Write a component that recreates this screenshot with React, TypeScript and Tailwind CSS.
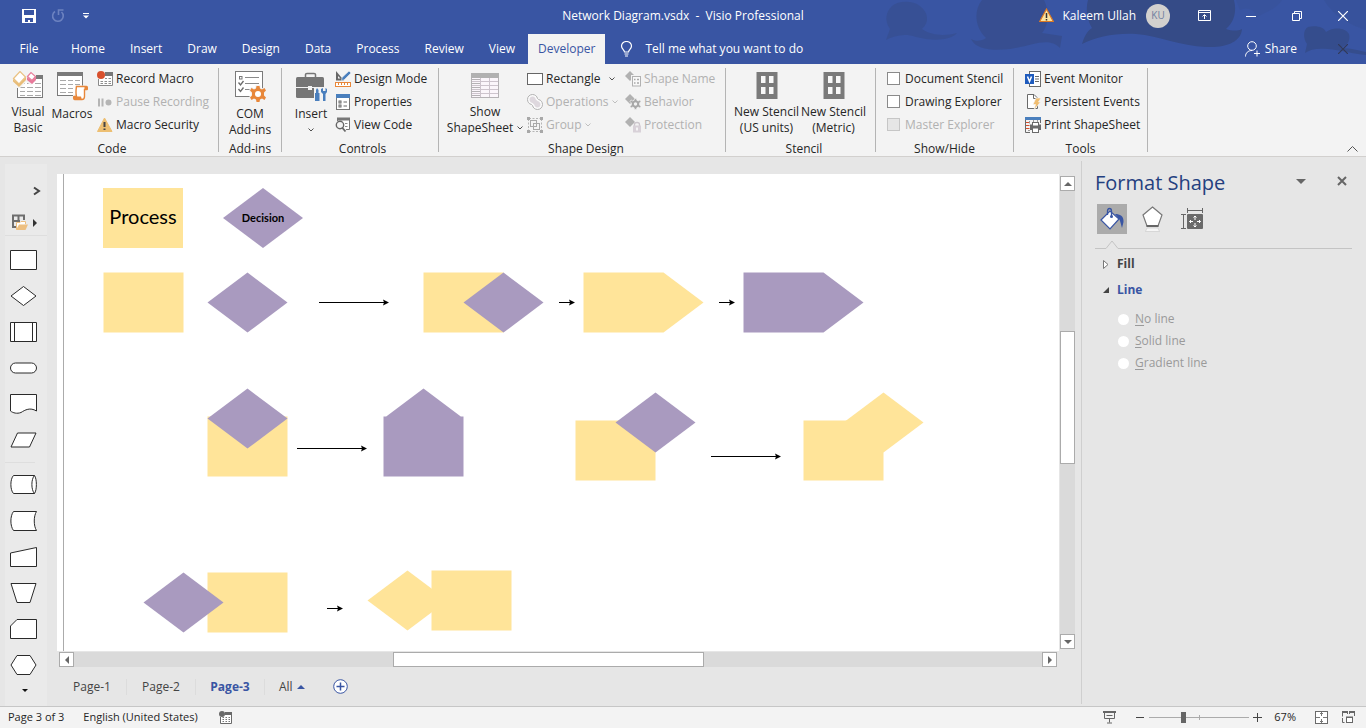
import React, { useState } from "react";

const tabs = [
  "Home",
  "Insert",
  "Draw",
  "Design",
  "Data",
  "Process",
  "Review",
  "View",
  "Developer",
];

const YELLOW = "#ffe499";
const PURPLE = "#a99abf";

/* ---------- small shared pieces ---------- */

function Chevron({ className = "" }: { className?: string }) {
  return (
    <svg width="6" height="4" viewBox="0 0 6 4" className={className}>
      <path d="M0.5 0.5L3 3L5.5 0.5" fill="none" stroke="currentColor" strokeOpacity=".8" />
    </svg>
  );
}

function Group({
  label,
  className,
  children,
}: {
  label: string;
  className: string;
  children: React.ReactNode;
}) {
  return (
    <>
      <section className={`flex shrink-0 flex-col ${className}`}>
        <div className="flex h-[69px]">{children}</div>
        <div className="mt-[5px] h-[15px] text-center leading-4">{label}</div>
      </section>
      <div className="mt-px h-[84px] w-px shrink-0 bg-[#b4b4b4]" />
    </>
  );
}

function BigButton({
  icon,
  lines,
  className,
  arrow,
}: {
  icon: React.ReactNode;
  lines: string[];
  className: string;
  arrow?: boolean;
}) {
  return (
    <button className={`flex shrink-0 flex-col items-center pt-1 leading-4 ${className}`}>
      <span className="mb-[3px] flex h-8 items-start justify-center">{icon}</span>
      {lines.map((line, i) => (
        <span key={line} className="flex items-center gap-1 whitespace-nowrap">
          {line}
          {arrow && i === 1 && <Chevron />}
        </span>
      ))}
      {arrow && lines.length === 1 && <Chevron className="mt-1.5" />}
    </button>
  );
}

function SmallButton({
  icon,
  label,
  disabled,
  arrow,
}: {
  icon: React.ReactNode;
  label: string;
  disabled?: boolean;
  arrow?: "near" | "far";
}) {
  return (
    <button
      disabled={disabled}
      className="flex h-[23px] items-center gap-[3px] whitespace-nowrap disabled:text-[#b1b1b1]"
    >
      {icon}
      {label}
      {arrow && <Chevron className={arrow === "far" ? "ml-1.5" : ""} />}
    </button>
  );
}

/* ---------- ribbon icons ---------- */

function VisualBasicIcon() {
  return (
    <svg width="32" height="30" viewBox="0 0 32 30">
      <rect x="5.5" y="4.5" width="25" height="22" fill="#fff" stroke="#7a7a7a" />
      <rect x="5" y="4" width="26" height="4" fill="#7a7a7a" />
      <path d="M8 12.5h5M15 12.5h6M23 12.5h6M8 16.5h5M15 16.5h6M23 16.5h6M8 20.5h5M15 20.5h6M23 20.5h6M8 24.5h5M15 24.5h6M23 24.5h6" stroke="#a9a9a9" />
      <path d="M0 8L8 -1H16L24 4V10L19 14L14 11L8 17H4L0 12Z" fill="#f3f3f3" />
      <path d="M1.5 7.5L8 0.5L13.5 6L7 13Z" fill="#fff" stroke="#eac282" strokeWidth="1.2" />
      <path d="M1 8L7 13V16L1 10.500ZM7 13L14 6V9L7 16Z" fill="#e8bd78" />
      <path d="M15.500 5.500L19 1.500L23.500 5.500L20 9.500Z" fill="#fff" stroke="#e77f9b" strokeWidth="1.200" />
      <path d="M15 6L20 9.500V13L15 9ZM20 9.500L24 5.500V9L20 13Z" fill="#e8799a" />
    </svg>
  );
}

function MacrosIcon() {
  return (
    <svg width="32" height="30" viewBox="0 0 32 30">
      <rect x="1.500" y="1.500" width="25" height="23" fill="#fff" stroke="#7a7a7a" />
      <rect x="1" y="1" width="26" height="4" fill="#7a7a7a" />
      <path d="M4 9.500h6M12 9.500h5M19 9.500h5M4 13.500h6M12 13.500h5M19 13.500h5M4 17.500h6M12 17.500h5M4 21.500h6M12 21.500h5" stroke="#a9a9a9" />
      <path d="M20 15.500H31V19H29V26.500L27 28.500H18V24.500H20Z" fill="#f3f3f3" stroke="#f3f3f3" strokeWidth="2" />
      <path d="M20.500 15.500H30.500C31.500 15.500 31.500 18.500 31 18.500H28.500V25.500C28.500 28 27 28.500 26 28.500H18.500C17.500 28.500 17.500 25.500 18 25.500H20.500C19.500 22 20 19 20.500 15.500Z" fill="#fff" stroke="#e8873a" strokeWidth="1.400" />
      <path d="M17.500 25.500H25L26 29H18.500C17.500 29 17 27 17.500 25.500ZM28.500 15H31C32 16 31.500 19 31 19H28.500Z" fill="#e8873a" />
    </svg>
  );
}

function RecordIcon() {
  return (
    <svg width="16" height="16" viewBox="0 0 16 16">
      <path d="M8 2.500H15.500V14.500H1.500V8" fill="#fff" stroke="#8a8a8a" />
      <rect x="8" y="1" width="8" height="4" fill="#777" />
      <path d="M8 7.500h2M11.500 7.500h2.500M3.500 10.500h2.500M7.500 10.500h2.500M11.500 10.500h2.500M3.500 12.500h2.500M7.500 12.500h2.500M11.500 12.500h2.500" stroke="#8f8f8f" />
      <circle cx="4" cy="4" r="4" fill="#d8502d" />
    </svg>
  );
}

function PauseIcon() {
  return (
    <svg width="16" height="16" viewBox="0 0 16 16">
      <path d="M2 4.500V12.500M5.500 4.500V12.500" stroke="#b5b5b5" strokeWidth="2" />
      <circle cx="11.500" cy="8.500" r="3" fill="#b5b5b5" />
    </svg>
  );
}

function WarnIcon() {
  return (
    <svg width="16" height="16" viewBox="0 0 16 16">
      <path d="M7.500 1L15 14.500H0.500Z" fill="#edbf72" stroke="#edbf72" strokeLinejoin="round" />
      <path d="M7.500 5V10M7.500 11.500V13" stroke="#444" strokeWidth="2" />
    </svg>
  );
}

const GEAR =
  "M-1.500 -8H1.500L2 -5.500L4 -4.500L6.500 -6L8 -3.500L6 -1.500V1.500L8 3.500L6.500 6L4 4.500L2 5.500L1.500 8H-1.500L-2 5.500L-4 4.500L-6.500 6L-8 3.500L-6 1.500V-1.500L-8 -3.500L-6.500 -6L-4 -4.500L-2 -5.500Z";

function ComIcon() {
  return (
    <svg width="32" height="32" viewBox="0 0 32 32">
      <rect x="1.500" y="0.500" width="27" height="25" fill="#fff" stroke="#7a7a7a" />
      <rect x="5.500" y="5.500" width="2.500" height="2.500" fill="none" stroke="#777" />
      <path d="M11 6.500H25M11 12.500H25M11 18.500H17" stroke="#8a8a8a" />
      <path d="M4.500 11.500L6.500 14L9.500 10M4.500 18L6.500 20.500L9.500 16.500" fill="none" stroke="#6a6a6a" strokeWidth="1.300" />
      <g transform="translate(24 23)">
        <path d={GEAR} fill="#f3f3f3" stroke="#f3f3f3" strokeWidth="2" />
        <path d={GEAR} fill="#e8873a" />
        <circle r="3" fill="#fff" />
      </g>
    </svg>
  );
}

function ToolboxIcon() {
  return (
    <svg width="32" height="32" viewBox="0 0 32 32">
      <path d="M10.500 6V3.500Q10.500 2.500 12 2.500H19Q20.500 2.500 20.500 3.500V6" fill="none" stroke="#767676" strokeWidth="1.500" />
      <rect x="1" y="6" width="28" height="21" rx="1.500" fill="#767676" />
      <path d="M1 16.500H13M17 16.500H20" stroke="#f3f3f3" />
      <rect x="13" y="15" width="4" height="4" fill="#f3f3f3" />
      <path d="M19 16H32V32H19Z" fill="#f3f3f3" />
      <path d="M21 19L22 17L23.500 19V22H24.500V30H20V22H21Z" fill="#4a7fbd" />
      <path d="M26 18V21L28 23V30H30.500V23L32 21V18L30.500 17V20H28V17Z" fill="#4a7fbd" />
    </svg>
  );
}

function DesignModeIcon() {
  return (
    <svg width="16" height="16" viewBox="0 0 16 16">
      <path d="M1 0V9.500H9Z" fill="#666" />
      <path d="M3 5V7.500H5.500Z" fill="#f3f3f3" />
      <path d="M6.500 9.500L7 6.500L14 0L16 2L9 9Z" fill="#4a7fbd" stroke="#f3f3f3" strokeWidth="0.600" />
      <rect x="0.500" y="11.500" width="15" height="4" fill="#fff" stroke="#e8873a" />
      <path d="M3.500 12V14M6.500 12V14M9.500 12V14M12.500 12V14" stroke="#e8873a" />
    </svg>
  );
}

function PropertiesIcon() {
  return (
    <svg width="16" height="16" viewBox="0 0 16 16">
      <rect x="1.500" y="1.500" width="13" height="14" fill="#fff" stroke="#777" />
      <rect x="1" y="0" width="14" height="4" fill="#4a7fbd" />
      <rect x="4" y="7" width="2" height="2" fill="none" stroke="#666" />
      <rect x="4" y="11" width="2" height="2" fill="none" stroke="#666" />
      <path d="M8.500 8H12M8.500 12H12" stroke="#666" />
    </svg>
  );
}

function ViewCodeIcon() {
  return (
    <svg width="16" height="16" viewBox="0 0 16 16">
      <path d="M2.500 4V1.500H14.500V12.500H11" fill="#fff" stroke="#777" />
      <rect x="2" y="0.500" width="13" height="3" fill="#777" />
      <path d="M10 6.500H12.500M10 9.500H12.500" stroke="#888" />
      <circle cx="5" cy="8" r="3.700" fill="#f3f3f3" stroke="#666" strokeWidth="1.400" />
      <path d="M7 10.500L10.500 14.500" stroke="#666" strokeWidth="1.800" />
    </svg>
  );
}

function SheetIcon() {
  return (
    <svg width="30" height="28" viewBox="0 0 30 28">
      <rect x="1.500" y="2.500" width="27" height="24" fill="#fbf6fb" stroke="#b5b2b5" />
      <rect x="1" y="2" width="28" height="5" fill="#b1b1b1" />
      <path d="M2 10.500H28M2 14.500H28M2 18.500H28M2 22.500H28M10.500 7V26M19.500 7V26" stroke="#cdc4cd" />
      <path d="M2 8.500H10M2 12.500H10M2 16.500H10M2 20.500H10M2 24.500H10" stroke="#b5b2b5" />
    </svg>
  );
}

function OperationsIcon() {
  return (
    <svg width="16" height="16" viewBox="0 0 16 16">
      <path d="M5.500 0.500C8 0.500 10 2.200 10.500 4.500L11.500 5.500C14 6 15.500 8 15.500 10.500C15.500 13.500 13.200 15.500 10.500 15.500C8 15.500 6 13.800 5.500 11.500L4.500 10.500C2 10 0.500 8 0.500 5.500C0.500 2.500 2.800 0.500 5.500 0.500Z" fill="#fafafa" stroke="#b1b1b1" />
      <path d="M5.500 2.500C7.500 2.500 8.500 4 8.800 5.500L10.500 7C12.500 7.500 13.500 9 13.500 10.500C13.500 12.500 12 13.500 10.500 13.500C8.500 13.500 7.500 12 7.200 10.500L5.500 9C3.500 8.500 2.500 7 2.500 5.500C2.500 3.500 4 2.500 5.500 2.500Z" fill="#ded8de" />
    </svg>
  );
}

function GroupIcon() {
  return (
    <svg width="16" height="16" viewBox="0 0 16 16">
      <path d="M2 1.500H14M2 14.500H14M1.500 2V14M14.500 2V14" stroke="#b5b5b5" strokeDasharray="2 1.500" />
      <rect x="3.500" y="3.500" width="6" height="6" fill="none" stroke="#a8a8a8" />
      <rect x="6.500" y="6.500" width="6" height="6" fill="none" stroke="#a8a8a8" />
      <path d="M0 0H3V3H0ZM13 0H16V3H13ZM0 13H3V16H0ZM13 13H16V16H13Z" fill="#a8a8a8" />
    </svg>
  );
}

function ShapeNameIcon() {
  return (
    <svg width="16" height="16" viewBox="0 0 16 16">
      <path d="M5 0L10 5L5 10L0 5Z" fill="#b1b1b1" />
      <rect x="6" y="4" width="10" height="12" fill="#f3f3f3" />
      <rect x="7.500" y="5.500" width="8" height="9.500" fill="#f8f8f8" stroke="#b1b1b1" />
      <path d="M9 8.500H10.500M12 8.500H14M9 12H10.500M12 12H14" stroke="#a8a8a8" strokeWidth="1.500" />
    </svg>
  );
}

function BehaviorIcon() {
  return (
    <svg width="16" height="16" viewBox="0 0 16 16">
      <path d="M5 0L10 5L5 10L0 5Z" fill="#b1b1b1" />
      <g transform="translate(10.500 10) scale(.68)">
        <path d={GEAR} fill="#a8a8a8" stroke="#f3f3f3" />
        <circle r="2.500" fill="#f3f3f3" />
      </g>
    </svg>
  );
}

function ProtectionIcon() {
  return (
    <svg width="16" height="16" viewBox="0 0 16 16">
      <path d="M5 0L10 5L5 10L0 5Z" fill="#b1b1b1" />
      <path d="M9.500 9V7.500Q9.500 5.500 12 5.500Q14.500 5.500 14.500 7.500V9" fill="none" stroke="#ccc6cc" strokeWidth="1.300" />
      <rect x="8" y="8.500" width="8" height="7" fill="#d8d1d8" />
      <path d="M12 10.500V13.500" stroke="#fff" strokeWidth="1.500" />
    </svg>
  );
}

function StencilIcon() {
  return (
    <svg width="22" height="28" viewBox="0 0 22 28">
      <path d="M0.500 1H21.500V28H0.500Z" fill="#7a7a7a" />
      <path d="M5 5H9.500V12H5ZM13 5H17.500V12H13ZM5 16H9.500V23H5ZM13 16H17.500V23H13Z" fill="#f8f8f8" />
    </svg>
  );
}

function EventIcon() {
  return (
    <svg width="16" height="16" viewBox="0 0 16 16">
      <rect x="4.500" y="0.500" width="11" height="15" fill="#fff" stroke="#6a6a6a" />
      <path d="M10 5.500H14M10 8H14M10 10.500H14" stroke="#6a6a6a" />
      <rect x="0" y="3" width="9" height="10" fill="#1f5bbd" />
      <path d="M2.500 5.500L4.500 10.500L6.500 5.500" fill="none" stroke="#fff" strokeWidth="1.500" />
    </svg>
  );
}

function PersistentIcon() {
  return (
    <svg width="16" height="16" viewBox="0 0 16 16">
      <path d="M2.500 0.500H9L12.500 4V14.500H2.500Z" fill="#fff" stroke="#6a6a6a" />
      <path d="M8.500 0.500V4.500H12.500" fill="none" stroke="#6a6a6a" />
      <path d="M11 4H16L13.500 8H15.500L9 16L10.500 10.500H8Z" fill="#f0bd70" stroke="#f3f3f3" strokeWidth="0.700" />
    </svg>
  );
}

function PrintSheetIcon() {
  return (
    <svg width="16" height="16" viewBox="0 0 16 16">
      <path d="M0.500 3V15.500H5M15.500 3V6" fill="none" stroke="#6a6a6a" />
      <rect x="0" y="0" width="16" height="3" fill="#4a7fbd" />
      <path d="M1 5.500H4.500M1 8.500H4.500M1 11.500H4.500" stroke="#d8502d" />
      <path d="M4.500 4V6.500M8.500 3V5M12.500 3V5M5 13.500H3" stroke="#999" />
      <rect x="5" y="7.500" width="11" height="5.500" fill="#6a6a6a" />
      <rect x="7.500" y="5.500" width="6" height="3.500" fill="#fff" stroke="#6a6a6a" />
      <rect x="7.500" y="11" width="6" height="4.500" fill="#fff" stroke="#6a6a6a" />
    </svg>
  );
}

/* ---------- title bar ---------- */

function HeaderArt() {
  return (
    <svg className="absolute top-0 right-0" width="506" height="64" viewBox="0 0 506 64">
      <g fill="#354b87">
        <path d="M32 6C38 1 52 0 60 6C68 12 70 22 62 29C72 36 86 36 97 33C90 41 72 41 56 37C44 33 34 36 26 40L30 29C24 20 26 12 32 6Z" opacity=".5" />
        <path d="M122 0H184C190 12 188 26 182 33L202 36L200 48C188 36 172 46 150 49C134 51 116 50 111 39C116 42 122 41 126 38C114 26 114 10 122 0Z" opacity=".65" />
        <path d="M228 0H374C377 12 374 22 366 29C372 31 378 31 382 29C381 42 366 48 346 47C320 46 300 36 276 34C254 33 236 37 222 44C224 38 226 32 232 28C226 18 226 8 228 0Z" />
        <path d="M448 27C456 25 464 27 466 32C474 26 486 28 489 34C491 42 486 46 480 48C492 48 500 51 506 52V55C494 54 480 50 468 49C458 48 450 49 445 53L447 44C443 38 443 30 448 27Z" opacity=".8" />
        <path d="M464 0H506V30C494 26 474 18 464 0Z" opacity=".25" />
        <path d="M380 10C388 6 396 10 396 18C404 12 416 10 422 0H376Z" opacity=".2" />
      </g>
    </svg>
  );
}

function Header() {
  const [active, setActive] = useState("Developer");

  return (
    <header className="relative shrink-0 bg-[#3955a3] text-white">
      <HeaderArt />
      <div className="relative grid h-[34px] grid-cols-[1fr_auto_1fr] items-start">
        <div className="flex h-8 items-center pl-[22px]">
          <button aria-label="Save">
            <svg width="14" height="14" viewBox="0 0 14 14">
              <path d="M0 0H14V14H0Z" fill="#fff" />
              <path d="M2 1H12V6H2ZM3 9H11V13H8V11H6V13H3Z" fill="#3955a3" />
            </svg>
          </button>
          <button aria-label="Undo" className="ml-3.5">
            <svg width="16" height="14" viewBox="0 0 16 14">
              <path d="M5 2.500A5.300 5.300 0 1 0 11.500 3" fill="none" stroke="#6c82c0" strokeWidth="1.600" />
              <path d="M8.500 6V1H13.500" fill="none" stroke="#6c82c0" strokeWidth="1.600" />
            </svg>
          </button>
          <button aria-label="Customize toolbar" className="ml-[17px]">
            <svg width="6" height="6" viewBox="0 0 6 6">
              <path d="M0 0.500H6" stroke="#fff" />
              <path d="M0 2.500H6L3 5.500Z" fill="#fff" />
            </svg>
          </button>
        </div>
        <div className="h-8 leading-8 whitespace-nowrap">Network Diagram.vsdx&nbsp; -&nbsp; Visio Professional</div>
        <div className="flex h-[31px] items-center justify-end pr-[18px]">
          <svg width="15" height="15" viewBox="0 0 15 15">
            <path d="M7.500 1L14.300 13.500H0.700Z" fill="#fbe3a0" stroke="#dc7a24" strokeWidth="1.200" />
            <path d="M7.500 5V10M7.500 11V12.500" stroke="#333" strokeWidth="1.500" />
          </svg>
          <span className="ml-2">Kaleem Ullah</span>
          <span className="ml-2.5 flex size-6 items-center justify-center rounded-full bg-[#d2d0ce] text-[10px] text-[#6f7fa0]">
            KU
          </span>
          <button aria-label="Ribbon display options" className="ml-7">
            <svg width="13" height="11" viewBox="0 0 13 11">
              <path d="M0.500 0.500H12.500V10.500H0.500ZM0.500 2.500H12.500M6.500 9V5M4.500 6.500L6.500 4.500L8.500 6.500" fill="none" stroke="#fff" />
            </svg>
          </button>
          <button aria-label="Minimize" className="ml-[35px]">
            <svg width="10" height="10" viewBox="0 0 10 10">
              <path d="M0 5.500H10" stroke="#fff" />
            </svg>
          </button>
          <button aria-label="Restore" className="ml-9">
            <svg width="10" height="10" viewBox="0 0 10 10">
              <path d="M0.500 2.500H7.500V9.500H0.500ZM2.500 2.500V0.500H9.500V7.500H7.500" fill="none" stroke="#fff" />
            </svg>
          </button>
          <button aria-label="Close" className="ml-9">
            <svg width="10" height="10" viewBox="0 0 10 10">
              <path d="M0 0L10 10M10 0L0 10" stroke="#fff" strokeWidth="1.200" />
            </svg>
          </button>
        </div>
      </div>

      <nav className="relative flex h-[30px] items-stretch gap-px">
        <button className="w-[58px]">File</button>
        {tabs.map((tab) => (
          <button
            key={tab}
            onClick={() => setActive(tab)}
            className={
              tab === active
                ? "bg-[#f3f3f3] px-2.5 text-[#3955a3]"
                : "px-3"
            }
          >
            {tab}
          </button>
        ))}
        <button className="ml-3.5 flex items-center gap-3">
          <svg width="13" height="16" viewBox="0 0 13 16">
            <path d="M4.500 11C4.500 9 1.500 8 1.500 5A5 4.500 0 0 1 11.500 5C11.500 8 8.500 9 8.500 11ZM4.500 13H8.500M5 15H8" fill="none" stroke="#fff" strokeWidth="1.200" />
          </svg>
          Tell me what you want to do
        </button>
        <button className="mr-10 ml-auto flex items-center gap-1">
          <svg width="16" height="16" viewBox="0 0 16 16">
            <circle cx="7" cy="5" r="4.300" fill="none" stroke="#fff" />
            <path d="M0.500 15.500C0.500 12 3 9.500 7 9.500M9 12.500H15M12 9.500V15.500" fill="none" stroke="#fff" />
          </svg>
          Share
        </button>
        <button aria-label="Close document" className="mr-[18px]">
          <svg width="10" height="10" viewBox="0 0 10 10">
            <path d="M0 0L10 10M10 0L0 10" stroke="#323a58" strokeWidth="1.200" />
          </svg>
        </button>
      </nav>
    </header>
  );
}

/* ---------- ribbon ---------- */

function CheckRow({ label, disabled }: { label: string; disabled?: boolean }) {
  return (
    <label className={`flex h-[23px] items-center gap-[5px] whitespace-nowrap ${disabled ? "text-[#b1b1b1]" : ""}`}>
      <input
        type="checkbox"
        disabled={disabled}
        className="size-[13px] appearance-none border border-[#8a8a8a] bg-white checked:bg-[#3955a3] disabled:border-[#c6c6c6] disabled:bg-[#e6e6e6]"
      />
      {label}
    </label>
  );
}

function Ribbon() {
  return (
    <div className="flex shrink-0 border-b border-[#d2d0ce] bg-[#f3f3f3] pt-[3px]">
      <Group label="Code" className="w-[218px] pl-1.5">
        <BigButton icon={<VisualBasicIcon />} lines={["Visual", "Basic"]} className="w-11" />
        <BigButton icon={<MacrosIcon />} lines={["Macros"]} className="w-11" />
        <div className="ml-[3px]">
          <SmallButton icon={<RecordIcon />} label="Record Macro" />
          <SmallButton icon={<PauseIcon />} label="Pause Recording" disabled />
          <SmallButton icon={<WarnIcon />} label="Macro Security" />
        </div>
      </Group>
      <Group label="Add-ins" className="w-[62px]">
        <BigButton icon={<ComIcon />} lines={["COM", "Add-ins"]} className="w-full" />
      </Group>
      <Group label="Controls" className="w-[156px] pl-[5px]">
        <BigButton icon={<ToolboxIcon />} lines={["Insert"]} className="w-12" arrow />
        <div>
          <SmallButton icon={<DesignModeIcon />} label="Design Mode" />
          <SmallButton icon={<PropertiesIcon />} label="Properties" />
          <SmallButton icon={<ViewCodeIcon />} label="View Code" />
        </div>
      </Group>
      <Group label="Shape Design" className="w-[286px] pl-2">
        <BigButton icon={<SheetIcon />} lines={["Show", "ShapeSheet"]} className="w-[76px]" arrow />
        <div className="ml-1 w-[98px]">
          <SmallButton
            icon={
              <svg width="16" height="16" viewBox="0 0 16 16">
                <rect x="0.500" y="2.500" width="15" height="11" fill="#fff" stroke="#666" />
              </svg>
            }
            label="Rectangle"
            arrow="far"
          />
          <SmallButton icon={<OperationsIcon />} label="Operations" disabled arrow="near" />
          <SmallButton icon={<GroupIcon />} label="Group" disabled arrow="near" />
        </div>
        <div>
          <SmallButton icon={<ShapeNameIcon />} label="Shape Name" disabled />
          <SmallButton icon={<BehaviorIcon />} label="Behavior" disabled />
          <SmallButton icon={<ProtectionIcon />} label="Protection" disabled />
        </div>
      </Group>
      <Group label="Stencil" className="w-[149px] pl-[7px]">
        <BigButton icon={<StencilIcon />} lines={["New Stencil", "(US units)"]} className="w-[67px]" />
        <BigButton icon={<StencilIcon />} lines={["New Stencil", "(Metric)"]} className="w-[67px]" />
      </Group>
      <Group label="Show/Hide" className="w-[137px]">
        <div className="pl-[11px]">
          <CheckRow label="Document Stencil" />
          <CheckRow label="Drawing Explorer" />
          <CheckRow label="Master Explorer" disabled />
        </div>
      </Group>
      <Group label="Tools" className="w-[133px]">
        <div className="pl-[11px]">
          <SmallButton icon={<EventIcon />} label="Event Monitor" />
          <SmallButton icon={<PersistentIcon />} label="Persistent Events" />
          <SmallButton icon={<PrintSheetIcon />} label="Print ShapeSheet" />
        </div>
      </Group>
      <button aria-label="Collapse ribbon" className="mr-2 mb-1 ml-auto self-end">
        <svg width="11" height="6" viewBox="0 0 11 6">
          <path d="M0.500 5.500L5.500 0.500L10.500 5.500" fill="none" stroke="#555" />
        </svg>
      </button>
    </div>
  );
}

/* ---------- stencil rail ---------- */

const flowShapes = [
  ["M0.500 4.500H26.500V23.500H0.500Z"],
  ["M13.500 4.500L26 14L13.500 23.500L1 14Z"],
  ["M0.500 4.500H26.500V23.500H0.500Z", "M4.500 4.500V23.500M22.500 4.500V23.500"],
  ["M5.500 9H21.500A5 5 0 0 1 21.500 19H5.500A5 5 0 0 1 5.500 9Z"],
  ["M0.500 4.500H26.500V21C20 17 15 20 11 22.500C7 24 3 23 0.500 21Z"],
  ["M7.500 7H26L19.500 21H1Z"],
];

const moreShapes = [
  ["M3.500 4.500H24.500C27 8 27 19 24.500 22.500H3.500C0 19 0 8 3.500 4.500Z", "M24.500 4.500C21 8 21 19 24.500 22.500"],
  ["M3.500 4.500H26.500C23.500 9 23.500 19 26.500 23.500H3.500C0 19 0 9 3.500 4.500Z"],
  ["M0.500 10L26.500 4.500V23.500H0.500Z"],
  ["M1 4.500H26L20 23.500H7Z"],
  ["M7 4.500H26.500V23.500H0.500V11Z"],
  ["M7 4.500H20L26 14L20 23.500H7L1 14Z"],
];

function RailShape({ paths }: { paths: string[] }) {
  return (
    <button className="flex h-9 items-center pl-[5px]">
      <svg width="27" height="28" viewBox="0 0 27 28">
        {paths.map((d, i) => (
          <path key={d} d={d} fill={i === 0 ? "#fff" : "none"} stroke="#2a2a2a" />
        ))}
      </svg>
    </button>
  );
}

function StencilRail() {
  return (
    <aside className="mt-[7px] ml-[5px] flex w-[42px] shrink-0 flex-col bg-[#eaeaea]">
      <button aria-label="Expand shapes" className="mt-[22px] mr-1.5 self-end">
        <svg width="8" height="10" viewBox="0 0 8 10">
          <path d="M1 1.500L6 5L1 8.500" fill="none" stroke="#444" strokeWidth="2" />
        </svg>
      </button>
      <button aria-label="More stencils" className="mt-[18px] ml-[7px] flex items-center gap-[5px]">
        <svg width="16" height="17" viewBox="0 0 16 17">
          <path d="M1 14V1.500H12V6M6.500 1V7M1 7H8M1 13H4" fill="none" stroke="#6e6e6e" strokeWidth="2" />
          <path d="M4.500 15.500V8.500H8L9 7.500H13.500V10" fill="#fff" stroke="#edbf80" />
          <path d="M4 16L7 10.500H16L13.500 16Z" fill="#edbf80" />
        </svg>
        <svg width="4" height="8" viewBox="0 0 4 8">
          <path d="M0 0L4 4L0 8Z" fill="#333" />
        </svg>
      </button>
      <div className="mt-1 mb-1.5 h-px bg-[#dedede]" />
      {flowShapes.map((paths) => (
        <RailShape key={paths[0]} paths={paths} />
      ))}
      <div className="my-1 mr-3 h-px bg-[#dedede]" />
      {moreShapes.map((paths) => (
        <RailShape key={paths[0]} paths={paths} />
      ))}
      <svg width="6" height="3" viewBox="0 0 6 3" className="mt-1.5 ml-[17px]">
        <path d="M0 0H6L3 3Z" fill="#111" />
      </svg>
    </aside>
  );
}

/* ---------- drawing page ---------- */

function Box({ x, y }: { x: number; y: number }) {
  return <rect x={x} y={y} width="80" height="60" fill={YELLOW} />;
}

function Diamond({ cx, cy, fill = PURPLE }: { cx: number; cy: number; fill?: string }) {
  return <path d={`M${cx} ${cy - 30}L${cx + 40} ${cy}L${cx} ${cy + 30}L${cx - 40} ${cy}Z`} fill={fill} />;
}

function Arrow({ x1, x2, y }: { x1: number; x2: number; y: number }) {
  return (
    <>
      <path d={`M${x1} ${y}H${x2 - 3}`} stroke="#000" />
      <path d={`M${x2} ${y}L${x2 - 6} ${y - 3}L${x2 - 5} ${y}L${x2 - 6} ${y + 3}Z`} fill="#000" />
    </>
  );
}

function Drawing() {
  return (
    <svg className="absolute inset-0 h-full w-full">
      <path d="M6.500 0V2000" stroke="#ababab" />
      <rect x="46" y="14" width="80" height="60" fill={YELLOW} />
      <text x="86" y="50" textAnchor="middle" className="font-['Lato',sans-serif] text-[20px]">
        Process
      </text>
      <Diamond cx={206} cy={44} />
      <text x="206" y="48" textAnchor="middle" className="font-['Lato',sans-serif] text-[11px] font-bold">
        Decision
      </text>

      <Box x={46.5} y={98.5} />
      <Diamond cx={190.5} cy={128.5} />
      <Arrow x1={262} x2={332} y={128.5} />
      <Box x={366.5} y={98.5} />
      <Diamond cx={446.5} cy={128.5} />
      <Arrow x1={502} x2={518} y={128.5} />
      <path d="M526.500 98.500H606.500L646.500 128.500L606.500 158.500H526.500Z" fill={YELLOW} />
      <Arrow x1={662} x2={678} y={128.5} />
      <path d="M686.500 98.500H766.500L806.500 128.500L766.500 158.500H686.500Z" fill={PURPLE} />

      <Box x={150.5} y={242.5} />
      <Diamond cx={190.5} cy={244.5} />
      <Arrow x1={240} x2={310} y={274.5} />
      <path d="M326.500 242.500H329.200L366.500 214.500L403.800 242.500H406.500V302.500H326.500Z" fill={PURPLE} />
      <Box x={518.5} y={246.5} />
      <Diamond cx={598.5} cy={248.5} />
      <Arrow x1={654} x2={724} y={282.5} />
      <Box x={746.5} y={246.5} />
      <Diamond cx={826.5} cy={248.5} fill={YELLOW} />

      <Box x={150.5} y={398.5} />
      <Diamond cx={126.5} cy={428.5} />
      <Arrow x1={270} x2={286} y={434.5} />
      <Diamond cx={350.5} cy={426.5} fill={YELLOW} />
      <Box x={374.5} y={396.5} />
    </svg>
  );
}

function ScrollButton({ d, label }: { d: string; label: string }) {
  return (
    <button
      aria-label={label}
      className="flex size-[15px] shrink-0 items-center justify-center border border-[#ababab] bg-white"
    >
      <svg width="8" height="8" viewBox="0 0 8 8">
        <path d={d} fill="#666" />
      </svg>
    </button>
  );
}

function PageTabs() {
  const [page, setPage] = useState("Page-3");

  return (
    <div className="flex h-[39px] items-center pl-px text-[#444]">
      {["Page-1", "Page-2", "Page-3"].map((name) => (
        <button
          key={name}
          onClick={() => setPage(name)}
          className={`h-4 w-[69px] border-r border-[#dcdcdc] leading-4 ${
            page === name ? "font-bold text-[#3955a3]" : ""
          }`}
        >
          {name}
        </button>
      ))}
      <button className="ml-3.5 flex items-center gap-1">
        All
        <svg width="8" height="4" viewBox="0 0 8 4">
          <path d="M0 4L4 0L8 4Z" fill="#3955a3" />
        </svg>
      </button>
      <button aria-label="Insert page" className="ml-7">
        <svg width="15" height="15" viewBox="0 0 15 15">
          <circle cx="7.500" cy="7.500" r="6.800" fill="#fff" stroke="#3955a3" />
          <path d="M7.500 3.500V11.500M3.500 7.500H11.500" stroke="#3955a3" strokeWidth="1.500" />
        </svg>
      </button>
    </div>
  );
}

function Canvas() {
  return (
    <main className="ml-2.5 flex min-w-0 flex-1 flex-col pt-[17px] pr-1.5">
      <div className="flex min-h-0 flex-1">
        <div className="relative min-w-0 flex-1 overflow-hidden bg-white">
          <Drawing />
        </div>
        <div className="ml-px flex w-[15px] flex-col bg-[#dadada] mt-0.5 mb-0.5">
          <ScrollButton d="M0 6L4 2L8 6Z" label="Scroll up" />
          <div className="flex-[141]" />
          <div className="flex-[132] border border-[#ababab] bg-white" />
          <div className="flex-[171]" />
          <ScrollButton d="M0 2H8L4 6Z" label="Scroll down" />
        </div>
      </div>
      <div className="mt-px mr-[18px] ml-0.5 flex h-[15px] bg-[#dadada]">
        <ScrollButton d="M6 0V8L2 4Z" label="Scroll left" />
        <div className="flex-[320]" />
        <div className="flex-[309] border border-[#ababab] bg-white" />
        <div className="flex-[339]" />
        <ScrollButton d="M2 0L6 4L2 8Z" label="Scroll right" />
      </div>
      <PageTabs />
    </main>
  );
}

/* ---------- format pane ---------- */

function FormatPane() {
  const lines = [
    ["N", "o line"],
    ["S", "olid line"],
    ["G", "radient line"],
  ];

  return (
    <aside className="mt-1 mb-0.5 w-[285px] shrink-0 border-l border-[#cfcfcf] pl-[13px]">
      <div className="mt-2 flex h-7 items-center">
        <h2 className="text-[20px] leading-7 text-[#24407f]">Format Shape</h2>
        <button aria-label="Pane options" className="mr-[31px] mb-1 ml-auto">
          <svg width="10" height="5" viewBox="0 0 10 5">
            <path d="M0 0H10L5 5Z" fill="#666" />
          </svg>
        </button>
        <button aria-label="Close pane" className="mr-[19px] mb-1">
          <svg width="10" height="10" viewBox="0 0 10 10">
            <path d="M1 1L9 9M9 1L1 9" stroke="#666" strokeWidth="2" />
          </svg>
        </button>
      </div>
      <div className="mt-[7px] ml-0.5 flex h-[30px] items-center">
        <button aria-label="Fill and line" className="flex size-[30px] items-center justify-center bg-[#ababab]">
          <svg width="24" height="24" viewBox="0 0 24 24">
            <path d="M1 13L10 4L19 12L10 22Z" fill="#fff" stroke="#3955a3" strokeWidth="1.200" />
            <path d="M7.500 8V4Q7.500 1.500 9.500 1.500Q11.500 1.500 11.500 4V9" fill="none" stroke="#3955a3" strokeWidth="1.300" />
            <circle cx="11.500" cy="9.500" r="1.500" fill="#3955a3" />
            <path d="M15 7C20 7 24 9 23.500 15L22 21C21 18 20.500 15 19.500 12.500Z" fill="#3955a3" />
          </svg>
        </button>
        <button aria-label="Effects" className="ml-[15px]">
          <svg width="21" height="26" viewBox="0 0 21 26">
            <path d="M10.500 1L20 9L16 20H5L1 9Z" fill="#fff" stroke="#777" strokeWidth="1.200" />
            <path d="M4.500 20H16.500" stroke="#666" strokeWidth="2" />
            <path d="M5 22L3.500 25.500H17.500L16 22Z" fill="#f6f6f6" stroke="#c8c8c8" strokeWidth=".6" />
          </svg>
        </button>
        <button aria-label="Size and properties" className="ml-[18px]">
          <svg width="22" height="22" viewBox="0 0 22 22">
            <path d="M6.500 2.500H21.500M6.500 0V5M21.500 0V5M2.500 6.500V20.500M0 6.500H5M0 20.500H5" fill="none" stroke="#666" />
            <rect x="6" y="6" width="16" height="15" rx="1" fill="#6a6a6a" />
            <path d="M14 8V12M14 15V19M8.500 13.500H12M16 13.500H19.500M12.500 9.500L14 8L15.500 9.500M12.500 17.500L14 19L15.500 17.500M10 12L8.500 13.500L10 15M18 12L19.500 13.500L18 15" fill="none" stroke="#fff" />
          </svg>
        </button>
      </div>
      <div className="mt-1.5 mr-3.5 flex">
        <svg width="24" height="9" viewBox="0 0 24 9">
          <path d="M0 8.500H11L17 1L23 8.500H24" fill="none" stroke="#c4c4c4" />
        </svg>
        <div className="flex-1 border-b border-[#c4c4c4]" />
      </div>
      <button className="mt-1.5 ml-2 flex h-[18px] items-center gap-2 font-bold text-[#444]">
        <svg width="6" height="9" viewBox="0 0 6 9">
          <path d="M0.500 0.500L5 4.500L0.500 8.500Z" fill="#fff" stroke="#777" />
        </svg>
        Fill
      </button>
      <button className="mt-2 ml-2 flex h-[18px] items-center gap-2 font-bold text-[#3955a3]">
        <svg width="6" height="6" viewBox="0 0 6 6">
          <path d="M6 0V6H0Z" fill="#444" />
        </svg>
        Line
      </button>
      <fieldset className="mt-[9px] ml-[23px]" disabled>
        {lines.map(([key, rest]) => (
          <label key={key} className="flex h-[22px] items-center gap-1.5 text-[#9a9a9a]">
            <input type="radio" name="line" className="size-[11px] appearance-none rounded-full bg-white" />
            <span>
              <u className="underline-offset-2">{key}</u>
              {rest}
            </span>
          </label>
        ))}
      </fieldset>
    </aside>
  );
}

/* ---------- status bar ---------- */

function StatusBar() {
  const [zoom, setZoom] = useState(67);

  return (
    <footer className="flex h-[22px] shrink-0 items-center border-t border-[#c6c6c6] bg-[#f3f3f3] pr-2.5 pl-2 text-[11px]">
      <span>Page 3 of 3</span>
      <span className="ml-[19px]">English (United States)</span>
      <svg width="14" height="13" viewBox="0 0 14 13" className="ml-[21px]">
        <path d="M1.500 6V12.500H12.500V2" fill="#fff" stroke="#6a6a6a" />
        <rect x="6" y="1" width="7" height="3" fill="#6a6a6a" />
        <path d="M3.500 6.500H5M6.500 6.500H8M9.500 6.500H11M3.500 8.500H5M6.500 8.500H8M9.500 8.500H11M3.500 10.500H5M6.500 10.500H8M9.500 10.500H11" stroke="#777" />
        <circle cx="3" cy="3" r="3" fill="#6a6a6a" />
      </svg>
      <button aria-label="Presentation mode" className="ml-auto">
        <svg width="13" height="13" viewBox="0 0 13 13">
          <path d="M0 1H13" stroke="#666" strokeWidth="2" />
          <path d="M1.500 2V7.500H11.500V2M3.500 4.500H9.500M6.500 7.500V11.500M4 12H9" fill="none" stroke="#666" />
        </svg>
      </button>
      <button aria-label="Zoom out" className="ml-5">
        <svg width="8" height="9" viewBox="0 0 8 9">
          <path d="M0 4.500H8" stroke="#444" />
        </svg>
      </button>
      <div className="relative ml-[5px] flex h-4 items-center">
        <div className="absolute left-1/2 h-[5px] w-px bg-[#ababab]" />
        <input
          type="range"
          aria-label="Zoom"
          min={0}
          max={200}
          value={zoom}
          onChange={(e) => setZoom(Number(e.target.value))}
          className="relative h-3 w-[100px] appearance-none bg-transparent [&::-webkit-slider-runnable-track]:h-px [&::-webkit-slider-runnable-track]:bg-[#ababab] [&::-webkit-slider-thumb]:-mt-[5px] [&::-webkit-slider-thumb]:h-[11px] [&::-webkit-slider-thumb]:w-[5px] [&::-webkit-slider-thumb]:appearance-none [&::-webkit-slider-thumb]:bg-[#666]"
        />
      </div>
      <button aria-label="Zoom in" className="ml-1">
        <svg width="9" height="9" viewBox="0 0 9 9">
          <path d="M0 4.500H9M4.500 0V9" stroke="#444" />
        </svg>
      </button>
      <span className="ml-3">{zoom}%</span>
      <button aria-label="Fit page" className="ml-[19px]">
        <svg width="13" height="13" viewBox="0 0 13 13">
          <rect x="0.500" y="0.500" width="12" height="12" fill="#fff" stroke="#6a6a6a" />
          <path d="M6.500 1V5M6.500 8V12M1 6.500H5M8 6.500H12M5 3L6.500 1.500L8 3M5 10L6.500 11.500L8 10" fill="none" stroke="#777" />
        </svg>
      </button>
      <button aria-label="Switch windows" className="ml-[13px]">
        <svg width="15" height="13" viewBox="0 0 15 13">
          <path d="M1.500 5.500V1.500H6.500V3M8.500 3V1.500H13.500V5M1.500 7V11.500H3.500" fill="none" stroke="#666" />
          <path d="M1 1H7M8 1H14M5 6.500H12" stroke="#666" strokeWidth="2" />
          <rect x="5.500" y="6.500" width="6" height="5" fill="#fff" stroke="#666" />
        </svg>
      </button>
    </footer>
  );
}

export default function App() {
  return (
    <div className="flex h-screen flex-col overflow-hidden bg-[#e6e6e6] font-['Open_Sans',sans-serif] text-[12px] text-[#262626]">
      <Header />
      <Ribbon />
      <div className="flex min-h-0 flex-1">
        <StencilRail />
        <Canvas />
        <FormatPane />
      </div>
      <StatusBar />
    </div>
  );
}
